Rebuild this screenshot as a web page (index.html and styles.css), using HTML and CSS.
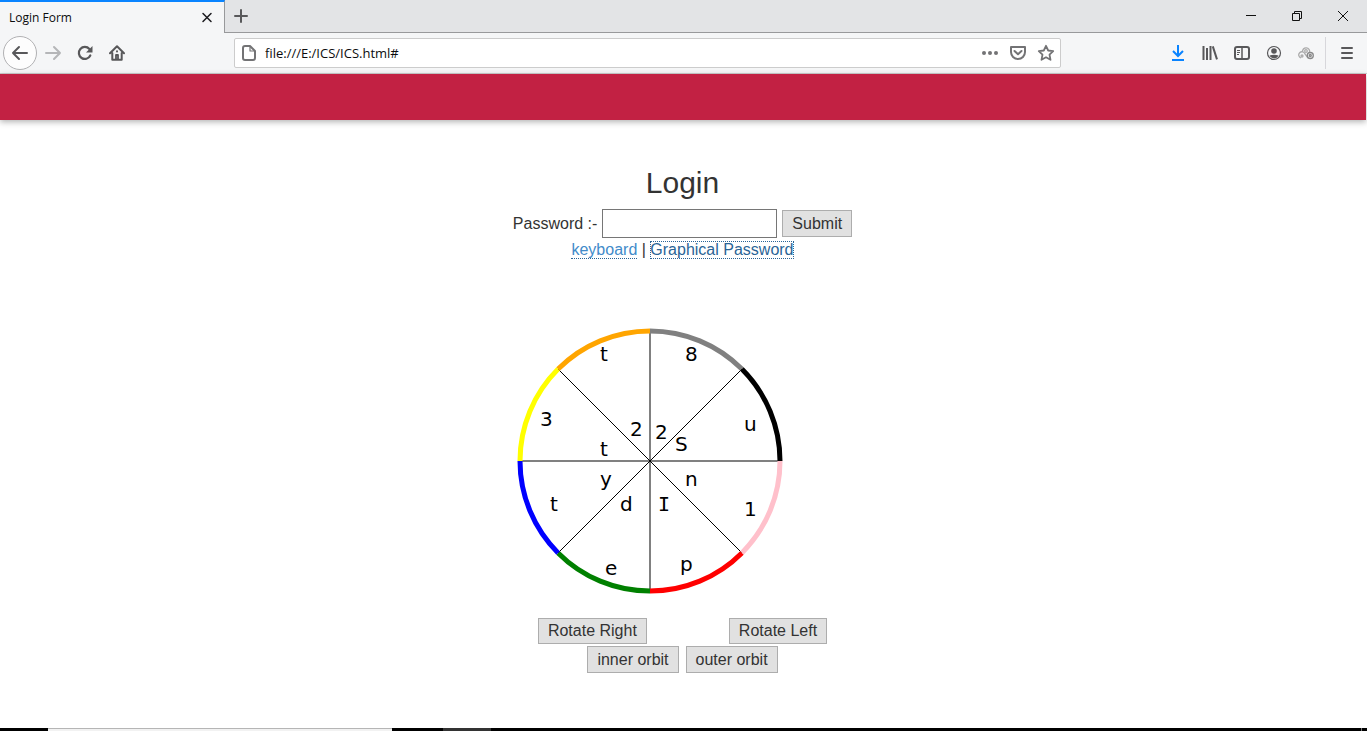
FILE: index.html
```html
<!DOCTYPE html>
<html lang="en">
<head>
<meta charset="utf-8">
<title>Login Form</title>
<link rel="stylesheet" href="styles.css">
</head>
<body>
<header class="browser">
  <div class="tabstrip">
    <div class="tab">
      <span class="tab-title">Login Form</span>
      <button class="icon-btn" aria-label="Close tab"><svg width="16" height="16" viewBox="0 0 16 16" fill="none" stroke="#1a1a1e" stroke-width="1.500" stroke-linecap="round"><path d="M4 3.500l8 8M12 3.500l-8 8"/></svg></button>
    </div>
    <button class="icon-btn new-tab" aria-label="New tab"><svg width="16" height="16" viewBox="0 0 16 16" fill="none" stroke="#58585a" stroke-width="2" stroke-linecap="round"><path d="M8 2v12M2 8h12"/></svg></button>
    <div class="window-controls">
      <button class="icon-btn win" aria-label="Minimize"><svg width="12" height="12" viewBox="0 0 12 12" stroke="#111" fill="none"><path d="M1 5.500h10"/></svg></button>
      <button class="icon-btn win" aria-label="Restore"><svg width="12" height="12" viewBox="0 0 12 12" stroke="#111" fill="none"><path d="M1.500 3.500h7v7h-7zM3.500 3V1.500h7v7H9"/></svg></button>
      <button class="icon-btn win" aria-label="Close"><svg width="12" height="12" viewBox="0 0 12 12" stroke="#111" fill="none"><path d="M1 1l10 10M11 1L1 11"/></svg></button>
    </div>
  </div>
  <div class="toolbar">
    <div class="nav">
      <button class="icon-btn back" aria-label="Back"><svg width="18" height="18" viewBox="0 0 18 18" fill="none" stroke="#58585a" stroke-width="2" stroke-linecap="round" stroke-linejoin="round"><path d="M16 9H2M8 3L2 9l6 6"/></svg></button>
      <button class="icon-btn tool" aria-label="Forward"><svg width="18" height="18" viewBox="0 0 18 18" fill="none" stroke="#b5b6b8" stroke-width="2" stroke-linecap="round" stroke-linejoin="round"><path d="M2 9h14M10 3l6 6-6 6"/></svg></button>
      <button class="icon-btn tool" aria-label="Reload"><svg width="16" height="16" viewBox="0 0 16 16"><path d="M13.300 10.500A6 6 0 1 1 12.400 4" fill="none" stroke="#58585a" stroke-width="2.200" stroke-linecap="round"/><path d="M15.500 1v6.500H9z" fill="#58585a"/></svg></button>
      <button class="icon-btn tool" aria-label="Home"><svg width="16" height="16" viewBox="0 0 16 16" fill="none" stroke="#58585a" stroke-width="2" stroke-linecap="round" stroke-linejoin="round"><path d="M1 8.300l7-7 7 7M3.300 8v6.700h9.400V8"/><path d="M7 14v-4h2v4" stroke-width="1.800"/><path d="M8 6.300v.100"/></svg></button>
    </div>
    <div class="urlbar">
      <svg width="16" height="16" viewBox="0 0 16 16" fill="none" stroke="#737375" stroke-width="2" stroke-linejoin="round"><path d="M4 1h5l5 5v7a2 2 0 0 1-2 2H4a2 2 0 0 1-2-2V3a2 2 0 0 1 2-2z"/><path d="M9 1.500V6h4.500" stroke-width="1.200"/></svg>
      <input class="url" type="text" aria-label="Address" value="file:///E:/ICS/ICS.html#">
      <button class="icon-btn" aria-label="Page actions"><svg width="18" height="16" viewBox="0 0 18 16" fill="#737375"><circle cx="3" cy="8" r="2"/><circle cx="9" cy="8" r="2"/><circle cx="15" cy="8" r="2"/></svg></button>
      <button class="icon-btn" aria-label="Save to Pocket"><svg width="18" height="16" viewBox="0 0 18 16" fill="none" stroke="#737375" stroke-width="2" stroke-linecap="round" stroke-linejoin="round"><path d="M2 2h14v5a7 7 0 0 1-14 0z"/><path d="M5.500 6L9 9.200 12.500 6"/></svg></button>
      <button class="icon-btn" aria-label="Bookmark"><svg width="18" height="18" viewBox="0 0 18 18" fill="none" stroke="#737375" stroke-width="1.800" stroke-linejoin="round"><path d="M9 1.800l2.200 4.700 5 .600-3.700 3.500 1 5.200L9 13.300l-4.500 2.500 1-5.200L1.800 7.100l5-.600z"/></svg></button>
    </div>
    <div class="actions">
      <button class="icon-btn tool" aria-label="Downloads"><svg width="16" height="16" viewBox="0 0 16 16" fill="none" stroke="#0a84ff" stroke-width="2"><path d="M8 0v11M3 6l5 5 5-5M2 15h12"/></svg></button>
      <button class="icon-btn tool" aria-label="Library"><svg width="16" height="16" viewBox="0 0 16 16" fill="none" stroke="#58585a" stroke-width="2"><path d="M1.500 1v14M5 3v12M8.500 1v14M10.800 1.400l4.200 13"/></svg></button>
      <button class="icon-btn tool" aria-label="Sidebars"><svg width="16" height="16" viewBox="0 0 16 16" fill="none" stroke="#58585a" stroke-width="2"><rect x="1" y="2" width="14" height="12" rx="2"/><path d="M8 2v12" stroke-width="1.500"/><path d="M3 5.500h3M3 7.500h3M3 9.500h2" stroke-width="1"/></svg></button>
      <button class="icon-btn tool" aria-label="Account"><svg width="16" height="16" viewBox="0 0 16 16"><circle cx="8" cy="8" r="6.500" fill="none" stroke="#58585a" stroke-width="1.200"/><circle cx="8" cy="6" r="2.800" fill="#58585a"/><path d="M3.500 10.500Q8 9 12.500 10.500 11 13.500 8 13.500T3.500 10.500z" fill="#58585a"/></svg></button>
      <button class="icon-btn tool" aria-label="Extension"><svg width="16" height="16" viewBox="0 0 16 16" fill="none" stroke="#aaa" stroke-width="1.300"><path d="M4.500 7a3.600 3.600 0 1 1 7 .500"/><circle cx="8" cy="6" r="1.300"/><path d="M3 13a3.200 3.200 0 1 1 4-4l3 4"/><circle cx="4" cy="11" r="1"/><circle cx="12.300" cy="10.500" r="3" stroke="#888"/><circle cx="12.300" cy="10.500" r="1" stroke="#888"/></svg></button>
      <button class="icon-btn menu" aria-label="Menu"><svg width="16" height="16" viewBox="0 0 16 16" stroke="#58585a" stroke-width="2" stroke-linecap="round"><path d="M3 3h10M3 8h10M3 13h10"/></svg></button>
    </div>
  </div>
</header>
<div class="banner"></div>
<main class="page">
  <h1 class="title">Login</h1>
  <form class="login">
    <label for="password">Password :-</label>
    <input class="password" id="password" type="password">
    <button class="btn" type="button">Submit</button>
  </form>
  <p class="links"><a class="link" href="#">keyboard</a> | <a class="link active" href="#">Graphical Password</a></p>
  <svg class="wheel" width="366" height="300" viewBox="0 0 366 300" role="img" aria-label="Password wheel">
    <g fill="none" stroke="#000" stroke-width="1">
      <path d="M150 20v260M20 150h260" stroke="#808080" stroke-width="2"/>
      <path d="M58 58l184 184M58 242L242 58"/>
    </g>
    <g fill="none" stroke-width="5">
      <path stroke="gray" d="M150 20A130 130 0 0 1 241.900 58.100"/>
      <path stroke="black" d="M241.900 58.100A130 130 0 0 1 280 150"/>
      <path stroke="pink" d="M280 150A130 130 0 0 1 241.900 241.900"/>
      <path stroke="red" d="M241.900 241.900A130 130 0 0 1 150 280"/>
      <path stroke="green" d="M150 280A130 130 0 0 1 58.100 241.900"/>
      <path stroke="blue" d="M58.100 241.900A130 130 0 0 1 20 150"/>
      <path stroke="yellow" d="M20 150A130 130 0 0 1 58.100 58.100"/>
      <path stroke="orange" d="M58.100 58.100A130 130 0 0 1 150 20"/>
    </g>
    <g class="wheel-text">
      <text x="100" y="50">t</text><text x="185" y="50">8</text>
      <text x="244" y="120">u</text><text x="244" y="205">1</text>
      <text x="180" y="260">p</text><text x="105" y="264">e</text>
      <text x="50" y="200">t</text><text x="40" y="115">3</text>
      <text x="130" y="125">2</text><text x="155" y="128">2</text>
      <text x="175" y="140">S</text><text x="185" y="175">n</text>
      <text class="slab" x="158" y="200">I</text><text x="120" y="200">d</text>
      <text x="100" y="175">y</text><text x="100" y="145">t</text>
    </g>
  </svg>
  <div class="rotate"><button class="btn short" type="button">Rotate Right</button><button class="btn short" type="button">Rotate Left</button></div>
  <div class="orbit"><button class="btn" type="button">inner orbit</button><button class="btn" type="button">outer orbit</button></div>
</main>
<footer class="taskbar"><span class="start"></span><span class="search"></span><span class="gap"></span><span class="task"></span><span class="rest"></span></footer>
</body>
</html>
```
FILE: styles.css
```css
* { box-sizing: border-box; }
body {
  margin: 0;
  min-height: 100vh;
  display: flex;
  flex-direction: column;
  background: #fff;
  color: #333;
  font: 16px/22px "Liberation Sans", Arial, sans-serif;
}
button, input { font: inherit; color: inherit; }
.icon-btn {
  display: flex;
  align-items: center;
  justify-content: center;
  padding: 0;
  border: 0;
  background: none;
}
.browser { font-family: "Open Sans", "Noto Sans", sans-serif; color: #0c0c0d; }
.tabstrip { display: flex; height: 33px; background: #e3e4e6; }
.tab {
  display: flex;
  align-items: center;
  justify-content: space-between;
  width: 225px;
  padding: 0 9px;
  border-top: 2px solid #0a84ff;
  border-right: 1px solid #98999b;
  background: #f5f6f7;
  font-size: 12px;
}
.new-tab { width: 32px; border-bottom: 1px solid #98999b; }
.window-controls {
  flex: 1;
  display: flex;
  justify-content: flex-end;
  padding-right: 1px;
  border-bottom: 1px solid #98999b;
}
.win { width: 46px; }
.toolbar {
  display: flex;
  align-items: center;
  height: 41px;
  border-bottom: 1px solid #ccc;
  background: #f5f6f7;
}
.nav { display: flex; align-items: center; width: 234px; padding-left: 3px; }
.tool { width: 32px; height: 32px; }
.back {
  width: 34px;
  height: 34px;
  border: 1px solid #b1b1b3;
  border-radius: 50%;
  background: #fdfdfd;
}
.urlbar {
  flex: 1;
  display: flex;
  align-items: center;
  gap: 10px;
  height: 30px;
  padding: 0 5px 0 6px;
  border: 1px solid #ccc;
  border-radius: 2px;
  background: #fff;
}
.url {
  flex: 1;
  min-width: 0;
  padding: 0;
  border: 0;
  background: none;
  font-size: 13px;
  outline: 0;
  margin-left: -2px;
}
.actions { display: flex; justify-content: flex-end; width: 306px; }
.menu { width: 42px; margin-left: 3px; border-left: 1px solid #d7d7db; }
.banner {
  height: 46px;
  margin-right: 1px;
  background: #c22143;
  box-shadow: 0 2px 6px rgba(0, 0, 0, 0.3);
}
.page {
  flex: 1;
  display: flex;
  flex-direction: column;
  align-items: center;
  padding: 46px 2px 0 0;
}
.title { margin: 0 0 10px; font-size: 30px; line-height: 33px; font-weight: 400; }
.login { display: flex; align-items: center; gap: 5px; }
.password { width: 175px; height: 29px; padding: 2px; border: 1px solid #767676; background: #fff; }
.btn {
  height: 27px;
  padding: 0 9px;
  border: 1px solid #adadad;
  background: #e1e1e1;
  line-height: 22px;
}
.short { height: 26px; }
.links { margin: 1px 0 50px; line-height: 22px; }
.link { color: #428bca; text-decoration: none; border-bottom: 1px dotted #2a6496; }
.active { color: #2a6496; outline: 1px dotted #2a6496; outline-offset: -1px; }
.wheel-text { font-family: "DejaVu Sans", Verdana, sans-serif; font-size: 20px; fill: #000; }
.slab { font-family: "DejaVu Sans Mono", monospace; }
.rotate { display: flex; gap: 82px; margin-top: 7px; }
.orbit { display: flex; gap: 7px; margin-top: 2px; }
.taskbar { display: flex; height: 3px; background: #000; }
.start { width: 48px; }
.search { width: 344px; border-top: 1px solid #b5b5b5; background: #f2f2f2; }
.gap { width: 51px; }
.task { width: 48px; background: #333; }
.rest { flex: 1; margin-right: 5px; border-right: 1px solid #777; }
```
